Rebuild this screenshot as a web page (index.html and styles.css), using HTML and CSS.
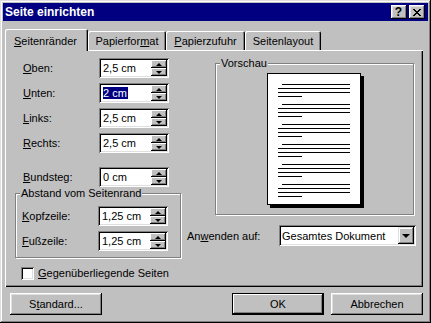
FILE: index.html
```html
<!DOCTYPE html>
<html lang="de">
<head>
<meta charset="utf-8">
<title>Seite einrichten</title>
<link rel="stylesheet" href="styles.css">
</head>
<body>
<div class="window">
  <div class="titlebar">
    <span class="title">Seite einrichten</span>
    <div class="tbtns">
      <div class="tbtn help">?</div>
      <div class="tbtn close">
        <svg width="8" height="7" viewBox="0 0 8 7"><path d="M0 0h2v1h-2zM6 0h2v1h-2zM1 1h2v1h-2zM5 1h2v1h-2zM2 2h4v1h-4zM3 3h2v1h-2zM2 4h4v1h-4zM1 5h2v1h-2zM5 5h2v1h-2zM0 6h2v1h-2zM6 6h2v1h-2z" fill="#000"/></svg>
      </div>
    </div>
  </div>

  <div class="tabs">
    <div class="tab active t1"><u>S</u>eitenränder</div>
    <div class="tab t2">Papierfor<u>m</u>at</div>
    <div class="tab t3"><u>P</u>apierzufuhr</div>
    <div class="tab t4">Seitenlayout</div>
  </div>

  <div class="panel">
    <div class="col-left">
      <div class="row">
        <span class="lbl"><u>O</u>ben:</span>
        <div class="spin"><span class="val">2,5 cm</span><div class="sbtns"><div class="sb"><i class="up"></i></div><div class="sb"><i class="down"></i></div></div></div>
      </div>
      <div class="row">
        <span class="lbl"><u>U</u>nten:</span>
        <div class="spin"><span class="val"><span class="sel">2 cm</span></span><div class="sbtns"><div class="sb"><i class="up"></i></div><div class="sb"><i class="down"></i></div></div></div>
      </div>
      <div class="row">
        <span class="lbl"><u>L</u>inks:</span>
        <div class="spin"><span class="val">2,5 cm</span><div class="sbtns"><div class="sb"><i class="up"></i></div><div class="sb"><i class="down"></i></div></div></div>
      </div>
      <div class="row">
        <span class="lbl"><u>R</u>echts:</span>
        <div class="spin"><span class="val">2,5 cm</span><div class="sbtns"><div class="sb"><i class="up"></i></div><div class="sb"><i class="down"></i></div></div></div>
      </div>
      <div class="row bund">
        <span class="lbl"><u>B</u>undsteg:</span>
        <div class="spin"><span class="val">0 cm</span><div class="sbtns"><div class="sb"><i class="up"></i></div><div class="sb"><i class="down"></i></div></div></div>
      </div>

      <div class="group abstand">
        <span class="gtitle">Abstand vom Seitenrand</span>
        <div class="grow first">
          <span class="lbl"><u>K</u>opfzeile:</span>
          <div class="spin"><span class="val">1,25 cm</span><div class="sbtns"><div class="sb"><i class="up"></i></div><div class="sb"><i class="down"></i></div></div></div>
        </div>
        <div class="grow">
          <span class="lbl"><u>F</u>ußzeile:</span>
          <div class="spin"><span class="val">1,25 cm</span><div class="sbtns"><div class="sb"><i class="up"></i></div><div class="sb"><i class="down"></i></div></div></div>
        </div>
      </div>

      <div class="check">
        <span class="cbox"></span>
        <span class="clbl"><u>G</u>egenüberliegende Seiten</span>
      </div>
    </div>

    <div class="col-right">
      <div class="group preview">
        <span class="gtitle">Vorschau</span>
        <svg class="page" width="97" height="135" viewBox="0 0 97 135">
          <rect x="3" y="3" width="94" height="132" fill="#000"/>
          <rect x="0.5" y="0.5" width="93" height="131" fill="#fff" stroke="#000"/>
          <g fill="#000">
            <rect x="15" y="11" width="68" height="1"/><rect x="11" y="15" width="72" height="1"/><rect x="11" y="19" width="72" height="1"/><rect x="11" y="23" width="24" height="1"/>
            <rect x="15" y="31" width="68" height="1"/><rect x="11" y="35" width="72" height="1"/><rect x="11" y="39" width="72" height="1"/><rect x="11" y="43" width="24" height="1"/>
            <rect x="15" y="51" width="68" height="1"/><rect x="11" y="55" width="72" height="1"/><rect x="11" y="59" width="72" height="1"/><rect x="11" y="63" width="24" height="1"/>
            <rect x="15" y="71" width="68" height="1"/><rect x="11" y="75" width="72" height="1"/><rect x="11" y="79" width="72" height="1"/><rect x="11" y="83" width="24" height="1"/>
            <rect x="15" y="91" width="68" height="1"/><rect x="11" y="95" width="72" height="1"/><rect x="11" y="99" width="72" height="1"/><rect x="11" y="103" width="24" height="1"/>
            <rect x="15" y="111" width="68" height="1"/><rect x="11" y="115" width="72" height="1"/><rect x="11" y="119" width="72" height="1"/><rect x="11" y="123" width="24" height="1"/>
          </g>
        </svg>
      </div>
      <div class="apply">
        <span class="alabel">An<u>w</u>enden auf:</span>
        <div class="combo">
          <span class="cval">Gesamtes Dokument</span>
          <div class="dd"><i class="darrow"></i></div>
        </div>
      </div>
    </div>
  </div>

  <div class="buttons">
    <div class="btn">S<u>t</u>andard...</div>
    <div class="btn default">OK</div>
    <div class="btn">Abbrechen</div>
  </div>
</div>
</body>
</html>
```

FILE: styles.css
```css
* {
  box-sizing: border-box;
  margin: 0;
  padding: 0;
}

html, body {
  margin: 0;
  background: #c0c0c0;
}

body {
  font-family: "Liberation Sans", Arial, sans-serif;
  font-size: 11px;
  color: #000;
}

u {
  text-decoration: underline;
  text-underline-offset: 1px;
}

.window {
  width: 431px;
  height: 323px;
  background: #c0c0c0;
  padding: 3px;
  display: flex;
  flex-direction: column;
  box-shadow: inset -1px -1px #000, inset 1px 1px #dfdfdf, inset -2px -2px #808080, inset 2px 2px #fff;
}

/* Title bar */
.titlebar {
  height: 18px;
  flex: none;
  background: #000080;
  color: #fff;
  display: flex;
  align-items: center;
  justify-content: space-between;
  padding: 0 3px 0 2px;
}

.title {
  font-weight: bold;
  font-size: 12px;
  line-height: 18px;
}

.tbtns {
  display: flex;
  gap: 2px;
}

.tbtn {
  width: 16px;
  height: 14px;
  background: #c0c0c0;
  color: #000;
  display: flex;
  align-items: center;
  justify-content: center;
  box-shadow: inset -1px -1px #000, inset 1px 1px #fff, inset -2px -2px #808080, inset 2px 2px #dfdfdf;
}

.help {
  font-weight: bold;
  font-size: 12px;
  line-height: 14px;
  padding-right: 1px;
}

.close svg {
  display: block;
}

/* Tabs */
.tabs {
  flex: none;
  height: 21px;
  margin: 8px 0 0 2px;
  display: flex;
  align-items: flex-end;
  position: relative;
  z-index: 1;
}

.tab {
  height: 19px;
  padding-top: 4px;
  line-height: 13px;
  text-align: center;
  background: #c0c0c0;
  border-radius: 2px 2px 0 0;
  box-shadow: inset 1px 1px #fff, inset -1px 0 #000, inset -2px 0 #808080;
}

.tab.active {
  height: 22px;
  padding-top: 6px;
  margin-bottom: -1px;
  padding-right: 2px;
}

.t1 { width: 83px; }
.t2 { width: 78px; }
.t3 { width: 79px; }
.t4 { width: 76px; }

/* Panel */
.panel {
  flex: none;
  width: 418px;
  height: 237px;
  margin-left: 2px;
  padding: 8px 0 0 10px;
  display: flex;
  box-shadow: inset 1px 1px #fff, inset -1px -1px #000, inset -2px -2px #808080;
}

.col-left {
  width: 172px;
  flex: none;
  display: flex;
  flex-direction: column;
  gap: 5px;
}

.row,
.grow {
  display: flex;
  align-items: center;
  height: 20px;
  flex: none;
}

.row {
  padding-left: 8px;
}

.row.bund {
  margin-top: 9px;
}

.lbl {
  width: 76px;
  flex: none;
}

/* Spin box */
.spin {
  width: 70px;
  height: 20px;
  background: #fff;
  display: flex;
  align-items: center;
  padding: 2px;
  box-shadow: inset 1px 1px #808080, inset -1px -1px #fff, inset 2px 2px #000, inset -2px -2px #dfdfdf;
}

.val {
  flex: 1;
  padding-left: 2px;
  line-height: 16px;
  white-space: nowrap;
}

.sel {
  background: #000080;
  color: #fff;
  display: inline-block;
  line-height: 12px;
  padding-right: 1px;
}

.sbtns {
  width: 16px;
  height: 16px;
  display: flex;
  flex-direction: column;
}

.sb {
  height: 8px;
  background: #c0c0c0;
  display: flex;
  align-items: center;
  justify-content: center;
  box-shadow: inset -1px -1px #000, inset 1px 1px #fff, inset -2px -2px #808080;
}

.sb i {
  display: block;
  width: 0;
  height: 0;
  border-left: 3px solid transparent;
  border-right: 3px solid transparent;
}

.sb i.up {
  border-bottom: 3px solid #000;
}

.sb i.down {
  border-top: 3px solid #000;
}

/* Group boxes */
.group {
  border: 1px solid #808080;
  box-shadow: inset 1px 1px #fff, 1px 1px #fff;
  display: flex;
  flex-direction: column;
}

.gtitle {
  align-self: flex-start;
  background: #c0c0c0;
  line-height: 13px;
  margin: -7px 0 0 4px;
  padding: 0 1px;
  flex: none;
}

.abstand {
  width: 166px;
  height: 65px;
  margin-top: 1px;
}

.abstand .grow {
  margin: 5px 0 0 6px;
}

.abstand .grow.first {
  margin-top: 6px;
}

/* Checkbox */
.check {
  display: flex;
  align-items: center;
  margin: 4px 0 0 6px;
  height: 13px;
}

.cbox {
  width: 13px;
  height: 13px;
  background: #fff;
  flex: none;
  box-shadow: inset 1px 1px #808080, inset -1px -1px #fff, inset 2px 2px #000, inset -2px -2px #dfdfdf;
}

.clbl {
  margin-left: 4px;
  line-height: 13px;
}

/* Right column */
.col-right {
  display: flex;
  flex-direction: column;
}

.preview {
  width: 199px;
  height: 152px;
  margin: 5px 0 0 28px;
}

.page {
  display: block;
  margin: 3px 0 0 51px;
}

.apply {
  display: flex;
  align-items: center;
  margin-top: 10px;
  height: 21px;
}

.alabel {
  width: 92px;
  flex: none;
}

.combo {
  width: 137px;
  height: 21px;
  background: #fff;
  display: flex;
  align-items: center;
  padding: 2px;
  box-shadow: inset 1px 1px #808080, inset -1px -1px #fff, inset 2px 2px #000, inset -2px -2px #dfdfdf;
}

.cval {
  flex: 1;
  padding-left: 1px;
  white-space: nowrap;
}

.dd {
  width: 16px;
  height: 17px;
  background: #c0c0c0;
  display: flex;
  align-items: center;
  justify-content: center;
  box-shadow: inset -1px -1px #000, inset 1px 1px #dfdfdf, inset -2px -2px #808080, inset 2px 2px #fff;
}

.darrow {
  display: block;
  width: 0;
  height: 0;
  border-left: 4px solid transparent;
  border-right: 4px solid transparent;
  border-top: 4px solid #000;
}

/* Bottom buttons */
.buttons {
  flex: none;
  display: flex;
  height: 22px;
  margin-top: 6px;
  padding: 0 5px 0 7px;
}

.btn {
  width: 92px;
  height: 22px;
  display: flex;
  align-items: center;
  justify-content: center;
  background: #c0c0c0;
  box-shadow: inset -1px -1px #000, inset 1px 1px #fff, inset -2px -2px #808080, inset 2px 2px #dfdfdf;
}

.btn.default {
  margin-left: auto;
  margin-right: 7px;
  box-shadow: inset 0 0 0 1px #000, inset -2px -2px #000, inset 2px 2px #fff, inset -3px -3px #808080;
}
```
